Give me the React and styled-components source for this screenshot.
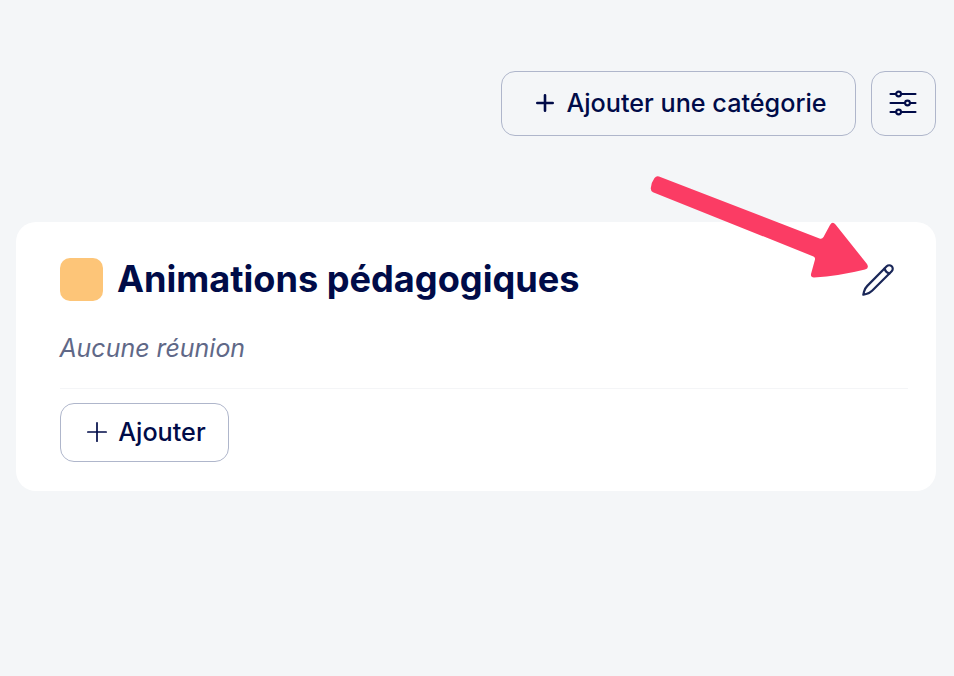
import React from "react";
import styled, { createGlobalStyle } from "styled-components";

const GlobalStyle = createGlobalStyle`
  *, *::before, *::after { box-sizing: border-box; }
  body {
    margin: 0;
    background: #f4f6f8;
    color: #000b48;
    font-family: Inter, sans-serif;
  }
  svg { display: block; flex: none; }
`;

const Page = styled.main`
  position: relative;
  width: 954px;
  height: 676px;
  padding: 71px 18px 0 16px;
  background: #f4f6f8;
  overflow: hidden;
`;

const Toolbar = styled.div`
  display: flex;
  justify-content: flex-end;
  gap: 15px;
  margin-bottom: 86px;
`;

const Button = styled.button`
  display: flex;
  align-items: center;
  justify-content: ${(p) => (p.$square ? "center" : "flex-start")};
  gap: ${(p) => p.$gap || 0}px;
  width: ${(p) => p.$width}px;
  height: ${(p) => p.$height}px;
  padding: ${(p) => (p.$square ? "0 1px 1px 0" : `0 0 1px ${p.$inset}px`)};
  border: 1px solid #afb6cb;
  border-radius: 14px;
  background: transparent;
  color: #000b48;
  font: 500 25.2px/28px Inter, sans-serif;
  white-space: nowrap;
`;

const Card = styled.section`
  height: 269px;
  padding: 36px 28px 0 44px;
  border-radius: 20px;
  background: #fff;
`;

const CardHeader = styled.header`
  display: flex;
  align-items: center;
  height: 43px;
`;

const Swatch = styled.span`
  width: 43px;
  height: 43px;
  margin-right: 14px;
  border-radius: 10px;
  background: #fdc578;
`;

const Title = styled.h2`
  flex: 1;
  margin: 0;
  font-size: 36.15px;
  font-weight: 700;
  line-height: 43px;
  white-space: nowrap;
`;

const EditButton = styled.button`
  display: flex;
  padding: 0;
  margin-right: 13px;
  border: 0;
  background: none;
  color: #1b2859;
`;

const Empty = styled.p`
  height: 88px;
  margin: 0 0 14px;
  padding-top: 31px;
  border-bottom: 1px solid #f4f5f7;
  color: #606887;
  font-size: 24.95px;
  font-style: italic;
  line-height: 32px;
  text-indent: -0.6px;
`;

const Arrow = styled.svg`
  position: absolute;
  left: 640px;
  top: 160px;
  pointer-events: none;
`;

function Plus({ size, stroke }) {
  return (
    <svg width={size} height={size} viewBox={`0 0 ${size} ${size}`} fill="none" stroke="currentColor" strokeWidth={stroke} strokeLinecap="round">
      <path d={`M${size / 2} ${stroke / 2}V${size - stroke / 2}M${stroke / 2} ${size / 2}H${size - stroke / 2}`} />
    </svg>
  );
}

function Sliders() {
  return (
    <svg width="28" height="26" viewBox="0 0 28 26" fill="none" stroke="currentColor" strokeWidth="2.1" strokeLinecap="round">
      <path d="M1.5 4H7M12.2 4H26.5M1.5 13H15.900M21.100 13H26.5M1.5 22H7M12.2 22H26.5" />
      <circle cx="9.6" cy="4" r="2.4" />
      <circle cx="18.5" cy="13" r="2.4" />
      <circle cx="9.6" cy="22" r="2.4" />
    </svg>
  );
}

function Pencil() {
  return (
    <svg width="34" height="34" viewBox="0 0 34 34" fill="none" stroke="currentColor" strokeWidth="2.2" strokeLinecap="round" strokeLinejoin="round">
      <path d="M2.3 31.7L3 28.800Q3.900 25.300 6.300 22.900L25.700 3.300A3.5 3.5 0 0 1 30.700 8.300L11.100 27.700Q8.700 30.100 5.200 31Z" />
      <path d="M23.5 5.600Q24.500 9.500 28.4 10.500" />
    </svg>
  );
}

export default function App() {
  return (
    <>
      <GlobalStyle />
      <Page>
        <Toolbar>
          <Button $width={355} $height={65} $inset={34} $gap={12.4}>
            <Plus size={18} stroke={2.6} />
            Ajouter une catégorie
          </Button>
          <Button $square $width={65} $height={65} aria-label="Filtres">
            <Sliders />
          </Button>
        </Toolbar>
        <Card>
          <CardHeader>
            <Swatch />
            <Title>Animations pédagogiques</Title>
            <EditButton aria-label="Modifier">
              <Pencil />
            </EditButton>
          </CardHeader>
          <Empty>Aucune réunion</Empty>
          <Button $width={169} $height={59} $inset={25.5} $gap={11.7}>
            <Plus size={20} stroke={1.7} />
            Ajouter
          </Button>
        </Card>
        <Arrow width="240" height="130" viewBox="0 0 240 130" aria-hidden="true">
          <path
            fill="#fb3c64"
            d="M19 16.5L179.5 78.4Q182 79.5 183.5 77L190 65Q192.500 61 195.5 64.5L227 104Q229.500 108.500 225 109.500Q199 116 174 117.500Q170.500 117.500 171 114L175 99.500Q175.500 97.500 173.500 96.500L13 32.200Q10.500 31 10.800 28Q11.500 22 14.500 18Q16.500 15.500 19 16.500Z"
          />
        </Arrow>
      </Page>
    </>
  );
}
